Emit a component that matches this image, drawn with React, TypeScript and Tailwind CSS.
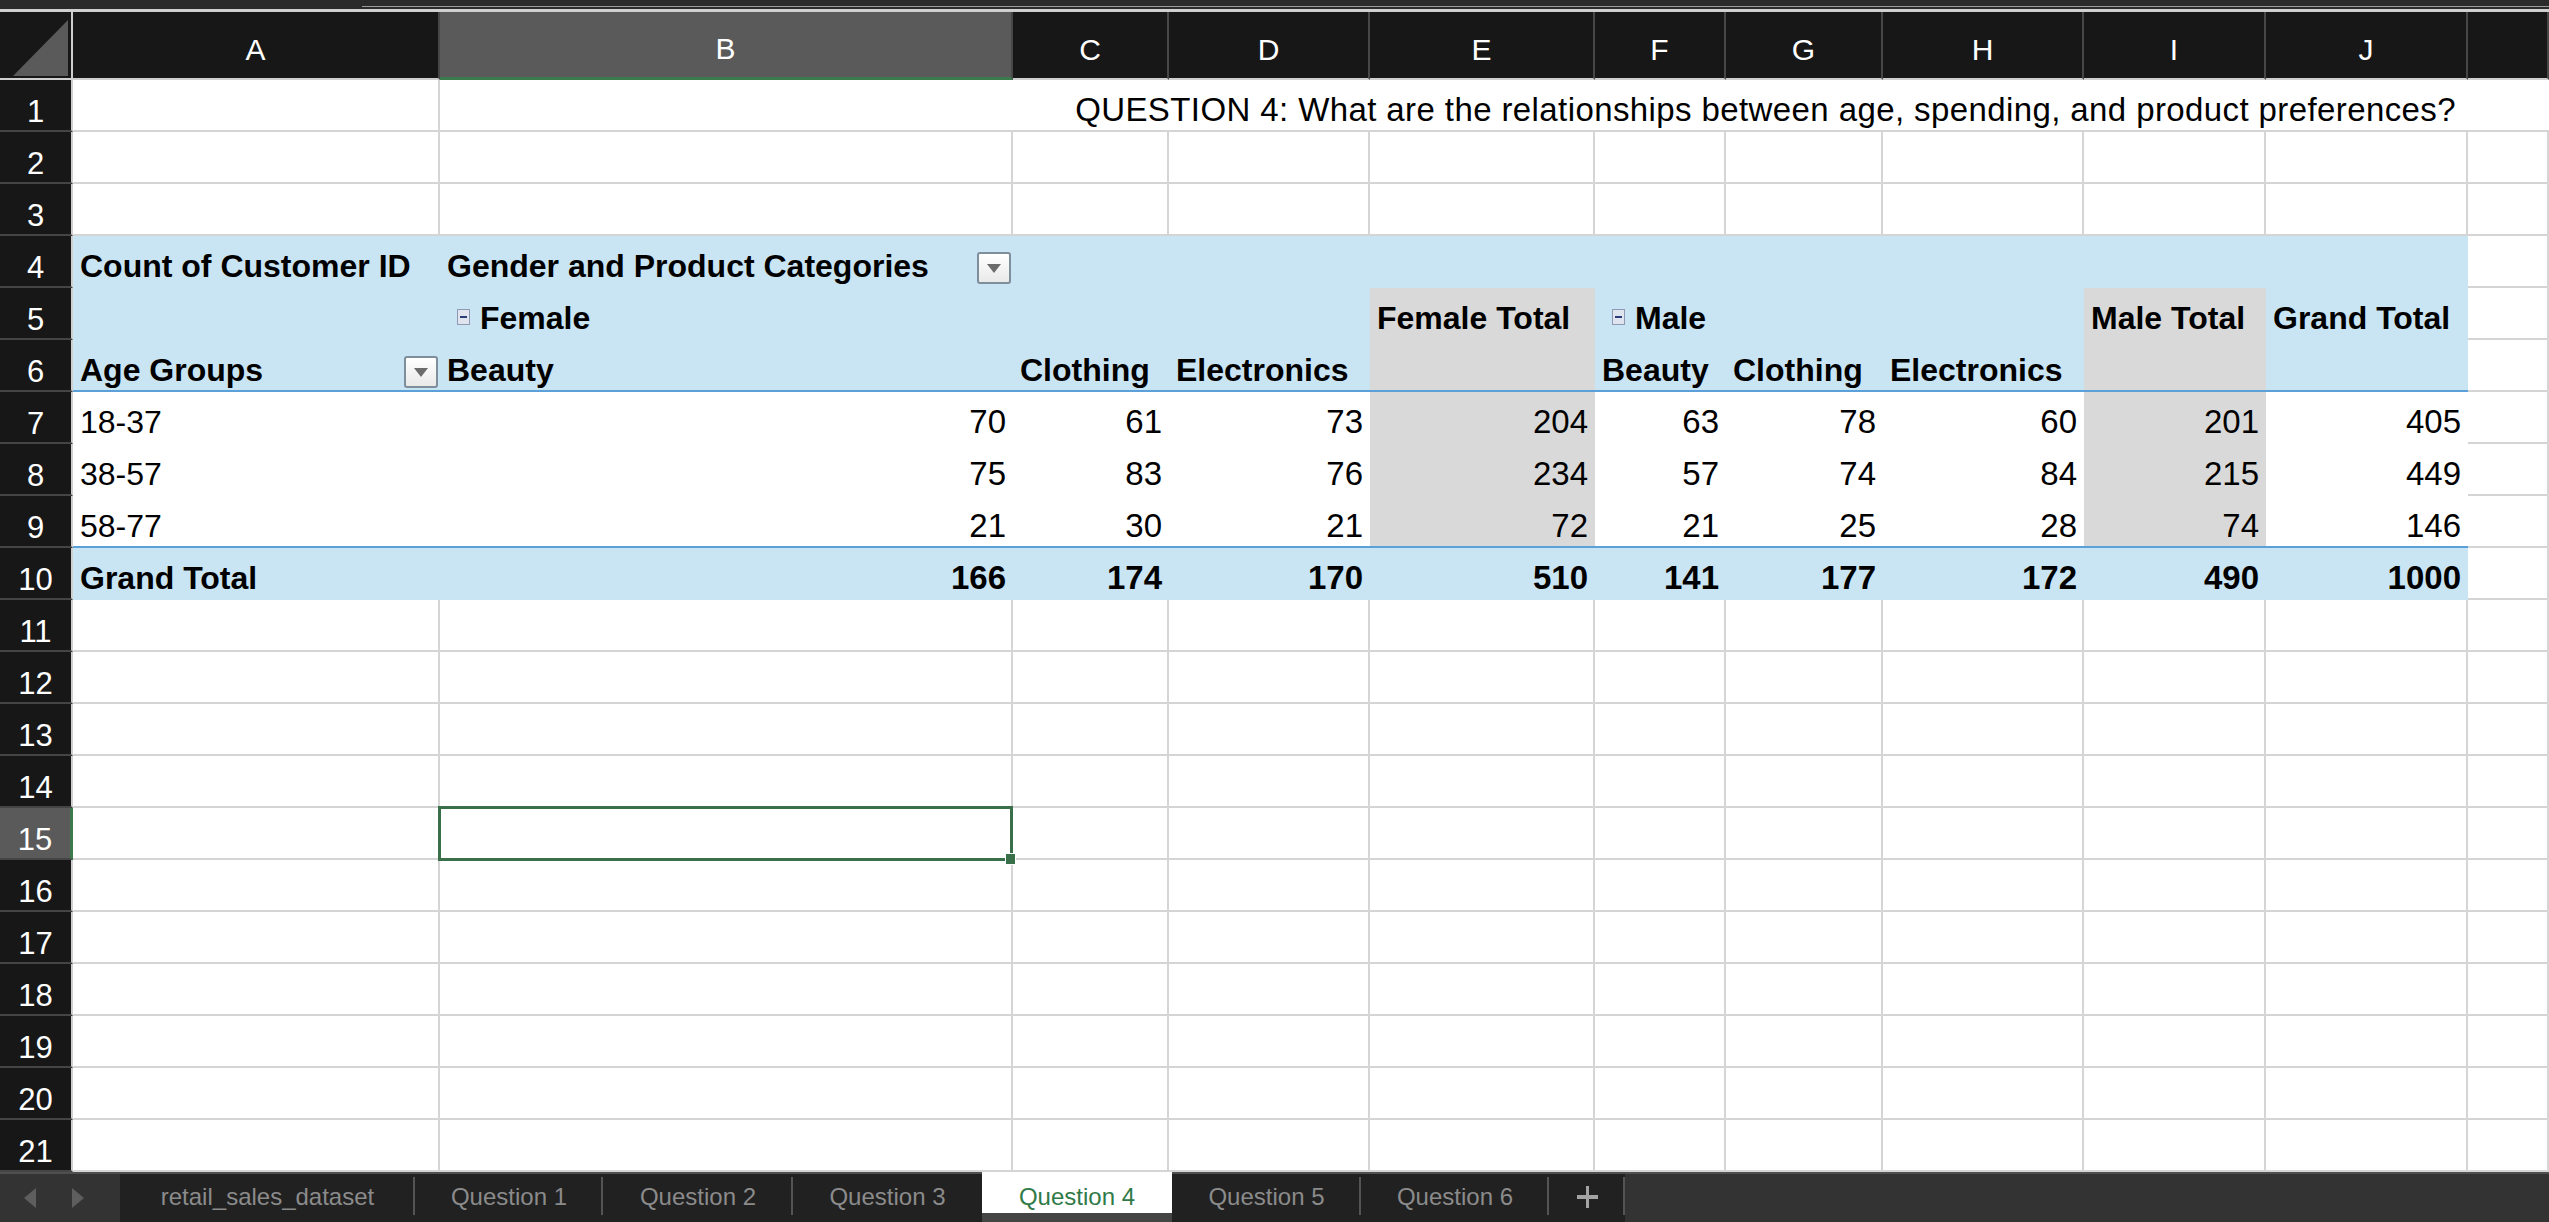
import clsx from "clsx";

// column template shared by header and every sheet row: row numbers, A..J, K (cut off)
const COLS =
  "grid grid-cols-[73px_367px_573px_156px_201px_225px_131px_157px_201px_182px_202px_1fr]";
const LETTERS = ["A", "B", "C", "D", "E", "F", "G", "H", "I", "J", "K"];

type Tone = "blue" | "gray" | "white";

type PCell = {
  v?: string;
  tone: Tone;
  num?: boolean;
  bold?: boolean;
  icon?: boolean;
  drop?: boolean;
};

const DATA: [string, number[]][] = [
  ["18-37", [70, 61, 73, 204, 63, 78, 60, 201, 405]],
  ["38-57", [75, 83, 76, 234, 57, 74, 84, 215, 449]],
  ["58-77", [21, 30, 21, 72, 21, 25, 28, 74, 146]],
];
const TOTALS = [166, 174, 170, 510, 141, 177, 172, 490, 1000];

const blank = (tone: Tone = "blue"): PCell => ({ tone });
const head = (v: string, extra: Partial<PCell> = {}): PCell => ({
  v,
  tone: "blue",
  bold: true,
  ...extra,
});

const PIVOT: { n: number; line?: boolean; cells: PCell[] }[] = [
  {
    n: 4,
    cells: [
      head("Count of Customer ID"),
      head("Gender and Product Categories", { drop: true }),
      ...Array.from({ length: 8 }, () => blank()),
    ],
  },
  {
    n: 5,
    cells: [
      blank(),
      head("Female", { icon: true }),
      blank(),
      blank(),
      head("Female Total", { tone: "gray" }),
      head("Male", { icon: true }),
      blank(),
      blank(),
      head("Male Total", { tone: "gray" }),
      head("Grand Total"),
    ],
  },
  {
    n: 6,
    line: true,
    cells: [
      head("Age Groups", { drop: true }),
      head("Beauty"),
      head("Clothing"),
      head("Electronics"),
      blank("gray"),
      head("Beauty"),
      head("Clothing"),
      head("Electronics"),
      blank("gray"),
      blank(),
    ],
  },
  ...DATA.map(([label, nums], i) => ({
    n: 7 + i,
    line: i === 2,
    cells: [
      { v: label, tone: "white" as Tone },
      ...nums.map((x, j) => ({
        v: String(x),
        num: true,
        tone: (j === 3 || j === 7 ? "gray" : "white") as Tone,
      })),
    ],
  })),
  {
    n: 10,
    cells: [
      head("Grand Total"),
      ...TOTALS.map((x) => head(String(x), { num: true })),
    ],
  },
];

function RowNum({ n }: { n: number }) {
  const on = n === 15;
  return (
    <div
      className={clsx(
        "flex items-end justify-center border-b-2 border-b-[#454545] pb-[3px] text-[31px] leading-none text-white",
        on
          ? "border-r-[3px] border-r-[#3b7a4c] bg-[#5a5a5a]"
          : "border-r-2 border-r-[#cfcfcf] bg-[#171717]"
      )}
    >
      {n}
    </div>
  );
}

function DropButton() {
  return (
    <span className="mb-[-2px] ml-auto mr-[2px] flex h-[32px] w-[34px] shrink-0 items-center justify-center rounded-[3px] border-2 border-[#7f8e9b] bg-linear-to-b from-white to-[#e9e9e9]">
      <svg width="14" height="9" viewBox="0 0 14 9" aria-hidden>
        <path d="M0 0h14L7 9z" fill="#6b6b6b" />
      </svg>
    </span>
  );
}

function Collapse() {
  return (
    <span className="mb-[9px] mr-[10px] flex h-[16px] w-[13px] shrink-0 items-center justify-center border border-[#8f99b4] bg-[#dfe4ee]">
      <span className="h-[2px] w-[7px] bg-[#2a3b78]" />
    </span>
  );
}

function Pivot({ c, line }: { c: PCell; line?: boolean }) {
  return (
    <div
      className={clsx(
        "flex min-w-0 items-end whitespace-nowrap border-b-2 pb-[4px] leading-none",
        c.tone === "blue" && "bg-[#c9e4f3]",
        c.tone === "gray" && "bg-[#d9d9d9]",
        c.tone === "white" && "bg-white",
        line ? "border-[#5ba0d8]" : "border-transparent",
        c.num ? "justify-end pr-[7px] text-[33px]" : "text-[32px]",
        !c.num && (c.icon ? "pl-[17px]" : "pl-[7px]"),
        c.bold && "font-bold"
      )}
    >
      {c.icon && <Collapse />}
      {c.v}
      {c.drop && <DropButton />}
    </div>
  );
}

function Gridcell({ selected }: { selected?: boolean }) {
  return (
    <div className="relative border-b-2 border-r-2 border-[#d5d5d5]">
      {selected && (
        <>
          <div className="absolute -bottom-[3px] -left-[2px] -right-[2px] -top-[2px] z-10 border-[3px] border-[#3a7049]" />
          <div className="absolute -bottom-[6px] -right-[4px] z-10 h-[10px] w-[9px] bg-[#3a7049] ring-1 ring-white" />
        </>
      )}
    </div>
  );
}

function PlainRow({ n }: { n: number }) {
  return (
    <div className={clsx(COLS, "h-[52px] shrink-0")}>
      <RowNum n={n} />
      {LETTERS.map((l) => (
        <Gridcell key={l} selected={n === 15 && l === "B"} />
      ))}
    </div>
  );
}

function TitleRow() {
  return (
    <div className={clsx(COLS, "h-[52px] shrink-0")}>
      <RowNum n={1} />
      <Gridcell />
      <div className="col-span-10 flex items-end justify-end whitespace-nowrap border-b-2 border-[#d5d5d5] pb-[4px] pr-[93px] text-[33px] leading-none tracking-[0.4px]">
        QUESTION 4: What are the relationships between age, spending, and product preferences?
      </div>
    </div>
  );
}

function HeaderRow() {
  return (
    <div className={clsx(COLS, "h-[68px] shrink-0")}>
      <div className="border-b-2 border-r-2 border-[#cfcfcf] bg-[#171717]">
        <svg width="71" height="66" viewBox="0 0 71 66" aria-hidden>
          <polygon points="13,64 68,64 68,8" fill="#5a5a5a" />
        </svg>
      </div>
      {LETTERS.map((l) => (
        <div
          key={l}
          className={clsx(
            "flex items-end justify-center border-r-2 border-r-[#474747] pb-[13px] text-[30px] leading-none text-white",
            l === "B"
              ? "border-b-[3px] border-b-[#3b7a4c] bg-[#5a5a5a]"
              : "border-b-2 border-b-[#cfcfcf] bg-[#171717]"
          )}
        >
          {l === "K" ? "" : l}
        </div>
      ))}
    </div>
  );
}

function Tab({ label, w, sep = true }: { label: React.ReactNode; w: string; sep?: boolean }) {
  return (
    <div
      className={clsx(
        w,
        "relative flex items-center justify-center border-t-2 border-[#4f4f4f] bg-[#212121] pb-[2px] text-[#8b8b8b]"
      )}
    >
      {label}
      {sep && <span className="absolute right-0 top-[3px] h-[38px] w-[2px] bg-[#545454]" />}
    </div>
  );
}

function TabBar() {
  return (
    <div className="flex h-[50px] shrink-0 bg-[#333333] text-[24px] leading-none">
      <div className="flex w-[120px] items-center gap-[36px] border-t-2 border-[#4f4f4f] pl-[24px]">
        <svg width="12" height="20" viewBox="0 0 12 20" aria-hidden>
          <polygon points="12,0 12,20 0,10" fill="#5e5e5e" />
        </svg>
        <svg width="12" height="20" viewBox="0 0 12 20" aria-hidden>
          <polygon points="0,0 12,10 0,20" fill="#5e5e5e" />
        </svg>
      </div>
      <Tab w="w-[295px]" label="retail_sales_dataset" />
      <Tab w="w-[188px]" label="Question 1" />
      <Tab w="w-[190px]" label="Question 2" />
      <Tab w="w-[189px]" label="Question 3" sep={false} />
      <div className="flex w-[190px] items-start justify-center border-b-[9px] border-[#454545] bg-white pt-[13px] text-[#2f7a47]">
        Question 4
      </div>
      <Tab w="w-[189px]" label="Question 5" />
      <Tab w="w-[188px]" label="Question 6" />
      <Tab
        w="w-[76px]"
        label={
          <svg width="21" height="22" viewBox="0 0 21 22" aria-hidden>
            <rect x="9" y="0" width="3" height="22" fill="#a3a3a3" />
            <rect x="0" y="9" width="21" height="4" fill="#a3a3a3" />
          </svg>
        }
      />
      <div className="flex-1 border-t-2 border-[#4f4f4f]" />
    </div>
  );
}

export default function App() {
  return (
    <div className="flex h-[1222px] w-[2549px] flex-col overflow-hidden bg-white font-['Liberation_Sans',Arial,sans-serif] text-black">
      {/* window chrome above the grid */}
      <div className="flex h-[12px] shrink-0 flex-col bg-[#2a2a2a]">
        <div className="h-[6px]" />
        <div className="ml-[362px] h-[1px] bg-[#9a9a9a]" />
        <div className="h-[2px]" />
        <div className="h-[3px] bg-[#cfcfcf]" />
      </div>
      <HeaderRow />
      <TitleRow />
      <PlainRow n={2} />
      <PlainRow n={3} />
      {PIVOT.map((r) => (
        <div key={r.n} className={clsx(COLS, "h-[52px] shrink-0")}>
          <RowNum n={r.n} />
          {r.cells.map((c, i) => (
            <Pivot key={i} c={c} line={r.line} />
          ))}
          <Gridcell />
        </div>
      ))}
      {Array.from({ length: 11 }, (_, i) => (
        <PlainRow key={i} n={11 + i} />
      ))}
      <TabBar />
    </div>
  );
}
